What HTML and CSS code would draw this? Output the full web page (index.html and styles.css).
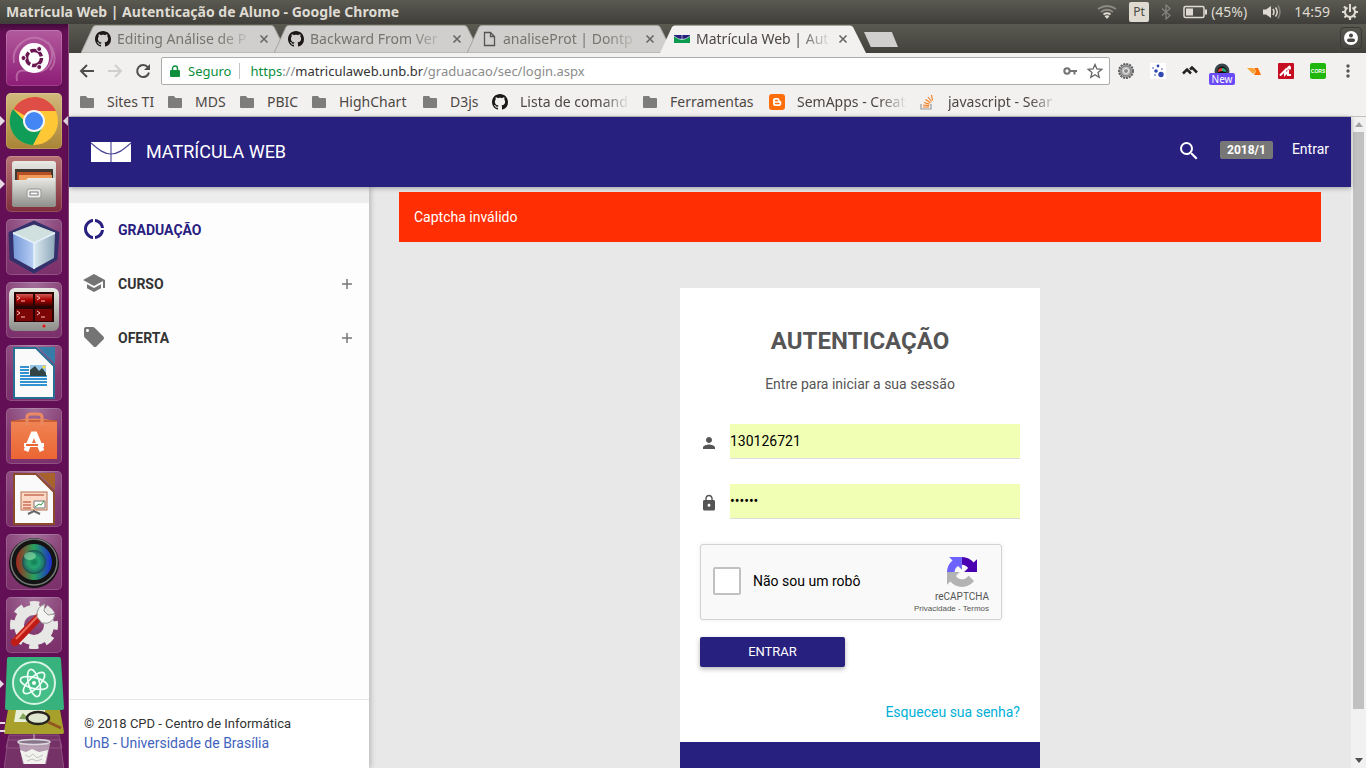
FILE: index.html
```html
<!DOCTYPE html>
<html lang="pt-BR">
<head>
<meta charset="utf-8">
<meta name="viewport" content="width=device-width, initial-scale=1">
<title>Matrícula Web | Autenticação de Aluno</title>
<link rel="stylesheet" href="styles.css">
</head>
<body>
<svg class="defs" aria-hidden="true">
  <defs>
    <symbol id="folder" viewBox="0 0 14 14"><path fill="#7d7d7b" d="M1 1h5l1.500 2H13a1 1 0 0 1 1 1v8a1 1 0 0 1-1 1H1a1 1 0 0 1-1-1V2a1 1 0 0 1 1-1z"/></symbol>
    <symbol id="github" viewBox="0 0 16 16"><path fill="#1b1817" d="M8 0C3.580 0 0 3.580 0 8c0 3.540 2.290 6.530 5.470 7.590.4.070.55-.17.55-.38 0-.19-.01-.82-.01-1.490-2.010.37-2.530-.49-2.690-.94-.09-.23-.48-.94-.82-1.130-.28-.15-.68-.52-.01-.53.63-.01 1.080.58 1.230.82.72 1.210 1.870.87 2.330.66.07-.52.28-.87.51-1.070-1.780-.2-3.640-.89-3.640-3.950 0-.87.31-1.590.82-2.150-.08-.2-.36-1.020.08-2.120 0 0 .67-.21 2.200.82.64-.18 1.320-.27 2-.27s1.360.09 2 .27c1.530-1.040 2.200-.82 2.200-.82.44 1.100.16 1.920.08 2.120.51.56.82 1.270.82 2.150 0 3.070-1.870 3.750-3.650 3.950.29.25.54.73.54 1.480 0 1.070-.01 1.930-.01 2.200 0 .21.15.46.55.38A8.010 8.010 0 0 0 16 8c0-4.420-3.580-8-8-8z"/></symbol>
    <symbol id="close" viewBox="0 0 10 10"><path d="M1.500 1.500l7 7M8.500 1.500l-7 7" stroke="#666" stroke-width="1.600" fill="none"/></symbol>
    <symbol id="plus" viewBox="0 0 12 12"><path d="M6 1v10M1 6h10" stroke="#777" stroke-width="1.500" fill="none"/></symbol>
    <symbol id="tabshape" viewBox="0 0 206 28"><path d="M0 28L12 2Q13 .5 15 .5H190Q192 .5 193 2L206 28z"/></symbol>
    <linearGradient id="gMetal" x2="0" y2="1"><stop stop-color="#e9e9e6"/><stop offset="1" stop-color="#8d8d8a"/></linearGradient>
    <linearGradient id="gBag" x2="0" y2="1"><stop stop-color="#f08556"/><stop offset="1" stop-color="#ec6533"/></linearGradient>
    <linearGradient id="gRed" x2="0" y2="1"><stop stop-color="#d25a55"/><stop offset=".5" stop-color="#a80000"/><stop offset="1" stop-color="#3c0000"/></linearGradient>
    <linearGradient id="gCubeL"><stop stop-color="#7598d8"/><stop offset="1" stop-color="#b9cff4"/></linearGradient>
    <linearGradient id="gCubeR"><stop stop-color="#dceaf2"/><stop offset="1" stop-color="#8da7b8"/></linearGradient>
    <radialGradient id="gLens"><stop stop-color="#0c7651"/><stop offset=".45" stop-color="#24a875"/><stop offset=".8" stop-color="#1d7a6a"/><stop offset="1" stop-color="#174048"/></radialGradient>
    <linearGradient id="gRing"><stop stop-color="#a3271b"/><stop offset=".5" stop-color="#26a35d"/><stop offset="1" stop-color="#1e2bd0"/></linearGradient>
  </defs>
</svg>

<header class="panel">
  <strong class="panel-title">Matrícula Web | Autenticação de Aluno - Google Chrome</strong>
  <div class="panel-tray">
    <svg width="20" height="16" viewBox="0 0 20 16" fill="none" stroke-width="1.800"><path d="M1 5Q10-1 19 5M4 8Q10 3.500 16 8" stroke="#8b8a83"/><path d="M6.500 10.500Q10 8 13.500 10.500" stroke="#dfdbd2"/><path d="M7.500 12L10 15l2.500-3Q10 10.500 7.500 12z" fill="#dfdbd2"/></svg>
    <span class="lang">Pt</span>
    <svg width="10" height="16" viewBox="0 0 10 16"><path d="M1 4.500l8 7-4 3.500V1l4 3.500-8 7" fill="none" stroke="#87867f" stroke-width="1.200"/></svg>
    <span class="battery"><svg width="25" height="14" viewBox="0 0 25 14"><rect x="1" y="1.500" width="20" height="11" rx="1.500" fill="none" stroke="#dfdbd2" stroke-width="1.500"/><path fill="#dfdbd2" d="M3 3.500h7v7H3zM22 4.500h2v5h-2z"/></svg>(45%)</span>
    <svg width="20" height="16" viewBox="0 0 20 16"><path d="M1 5.500h3L9 2v12L4 10.500H1z" fill="#dfdbd2"/><path d="M11 5q2 3 0 6M13.500 3.500q3.500 4.500 0 9" fill="none" stroke="#dfdbd2" stroke-width="1.500"/><path d="M16 1.500q4 6.500 0 13" fill="none" stroke="#85847d" stroke-width="1.500"/></svg>
    <span>14:59</span>
    <svg width="16" height="16" viewBox="0 0 16 16" fill="none" stroke="#dfdbd2"><path d="M5.500 3.700a5 5 0 1 0 5 0" stroke-width="2"/><path d="M8 0v8" stroke-width="2"/><path d="M2 2.500l2 2M14 2.500l-2 2M0 8h3M13 8h3M2.500 13.500l2-2M13.500 13.500l-2-2M8 13v3" stroke-width="2.200"/></svg>
  </div>
</header>

<div class="desktop">
  <nav class="launcher" aria-label="Aplicativos">
    <a href="#" class="tile tile-ubuntu" aria-label="Ubuntu"><svg viewBox="0 0 56 56"><g fill="none" stroke="#c884b4" opacity=".65" stroke-width="2"><path d="M8 33C5 17 21 4 35 9C48 14 53 30 44 40M11 51C8 35 22 42 31 42C44 42 51 26 42 12"/></g><circle cx="28" cy="28" r="15" fill="#fff"/><circle cx="28" cy="28" r="7.500" fill="none" stroke="#6b1751" stroke-width="3.500" stroke-dasharray="13.700 2"/><g fill="#6b1751" stroke="#fff"><circle cx="17.500" cy="28" r="2.500"/><circle cx="33.200" cy="19" r="2.500"/><circle cx="33.200" cy="37" r="2.500"/></g></svg></a>
    <a href="#" class="tile tile-chrome focused" aria-label="Chrome"><svg viewBox="0 0 56 56"><circle cx="28" cy="28" r="24" fill="#fdc735"/><path d="M28 28L7.500 16A24 24 0 0 1 50 18H28z" fill="#df4e46"/><path d="M28 38L7 16A24 24 0 0 0 27 52L37 33z" fill="#109d58"/><circle cx="28" cy="28" r="11" fill="#f4f4f4"/><circle cx="28" cy="28" r="9" fill="#4386f4"/></svg></a>
    <a href="#" class="tile tile-files running" aria-label="Arquivos"><svg viewBox="0 0 56 56"><path d="M6 8q0-3 3-3h38q3 0 3 3v42H6z" fill="url(#gMetal)"/><path d="M9 13h38v13H9z" fill="#403632"/><path d="M11 16h34v9H11z" fill="#b74f25"/><path d="M13 19h33v7H13z" fill="#f09a59"/><path d="M7 24h13l2-2h27v29H7z" fill="url(#gMetal)"/><rect x="21" y="33" width="14" height="9" rx="2" fill="#eee" stroke="#969693"/><rect x="24" y="36" width="8" height="3" fill="#fff" stroke="#777"/></svg></a>
    <a href="#" class="tile" aria-label="NetBeans"><svg viewBox="0 0 56 56"><path d="M28 3L52 14 50 40 28 53 5 40 4 14z" fill="#33306b" stroke="#33306b" stroke-width="3" stroke-linejoin="round"/><path d="M28 6L49 14 28 24 7 14z" fill="#cfe0de" stroke="#cfe0de" stroke-linejoin="round"/><path d="M7 14L28 24V50L8 39z" fill="url(#gCubeL)"/><path d="M49 14L28 24V50L48 39z" fill="url(#gCubeR)"/><path d="M7 14L28 24 49 14M28 24V50" fill="none" stroke="#e6f1fa" stroke-width="1.500"/></svg></a>
    <a href="#" class="tile" aria-label="Terminator"><svg viewBox="0 0 56 56"><rect x="3" y="6" width="50" height="43" rx="6" fill="url(#gMetal)"/><path d="M8 10h40v30H8z" fill="#2a0505"/><g fill="url(#gRed)"><path d="M10 12h17v12H10z"/><path d="M29 12h17v12H29z"/></g><path d="M10 27h17v12H10zM29 27h17v12H29z" fill="#7c0505"/><path d="M11 14l3 2-3 2M15 19h4M31 14l3 2-3 2M35 19h4M11 29l3 2-3 2M15 35h4M31 29l3 2-3 2M35 35h4" fill="none" stroke="#fbb"/><circle cx="38" cy="44" r="1.500" fill="#e11"/></svg></a>
    <a href="#" class="tile" aria-label="Writer"><svg viewBox="0 0 56 56"><path d="M8 3h22l18 18v32H8z" fill="#fafafa" stroke="#286f96" stroke-width="2"/><path d="M32 2h17v17z" fill="#357da8"/><path d="M14 22h9M14 25h9M14 28h9M14 31h27M14 34h27M14 37h27M14 40h27" stroke="#3592d0" stroke-width="2"/><path d="M24 20h16v11H24z" fill="#95c6e8"/><path d="M24 31v-6l5-4 4 5 3-3 4 5v3z" fill="#344"/><circle cx="38" cy="22" r="1.500" fill="#ffdc30"/></svg></a>
    <a href="#" class="tile" aria-label="Programas"><svg viewBox="0 0 56 56"><path d="M5 13q23-5 46 0v38H5z" fill="url(#gBag)"/><path d="M5 13h46" stroke="#a9431d"/><path d="M21 17V9q0-3 4-3h7q4 0 4 3v8" fill="none" stroke="#e98961" stroke-width="3"/><path d="M20 43L27 26h2l7 17" fill="none" stroke="#fff" stroke-width="5"/><path d="M18 37h20" stroke="#fff" stroke-width="4"/><path d="M20 37h12" stroke="#ec6732" stroke-width="2"/></svg></a>
    <a href="#" class="tile" aria-label="Impress"><svg viewBox="0 0 56 56"><path d="M8 3h22l18 18v32H8z" fill="#fafafa" stroke="#8b4b2a" stroke-width="2"/><path d="M32 2h17v17z" fill="#a8622b"/><rect x="15" y="21" width="26" height="18" fill="#fbd9c6" stroke="#b37150"/><path d="M18 24h20M17 31h8M17 34h8M17 37h8" stroke="#b33d20"/><path d="M28 30h11v7H28z" fill="#fff" stroke="#777"/><path d="M29 36l4-3 2 1 3-4" fill="none" stroke="#2a963e"/><path d="M28 39v2M22 43l6-3 6 3" fill="none" stroke="#666" stroke-width="2"/></svg></a>
    <a href="#" class="tile" aria-label="Câmera"><svg viewBox="0 0 56 56"><circle cx="28" cy="29" r="25" fill="#141414"/><circle cx="28" cy="28" r="23" fill="none" stroke="#777" stroke-width="1.500"/><circle cx="28" cy="28" r="18" fill="url(#gRing)"/><circle cx="28" cy="28" r="12" fill="url(#gLens)" opacity=".85"/><ellipse cx="24" cy="22" rx="6" ry="4" fill="#91dda8" opacity=".6"/></svg></a>
    <a href="#" class="tile" aria-label="Configurações"><svg viewBox="0 0 56 56"><circle cx="28" cy="28" r="15" fill="none" stroke="#e7e7e5" stroke-width="10"/><circle cx="28" cy="28" r="20" fill="none" stroke="#e7e7e5" stroke-width="8" stroke-dasharray="8.700 7" stroke-dashoffset="4.350"/><path d="M9 45L33 20" stroke="#bf1c16" stroke-width="8" stroke-linecap="round"/><path d="M10 42L31 20" stroke="#ee6a5b" stroke-width="2"/><path d="M31 20q-1-10 8-13l-1 7 4 4 7-1q-2 11-13 9z" fill="#f4f4f2" stroke="#999"/></svg></a>
    <a href="#" class="folded folded-atom running" aria-label="Atom"><svg viewBox="0 0 60 53"><path d="M4 0h50q2 0 2 2l3 49q0 2-3 2H3q-3 0-3-2L2 2q0-2 2-2z" fill="#38b27c"/><circle cx="29" cy="26" r="21" fill="#45bd87" stroke="#d6f3e4" stroke-width="2"/><g fill="none" stroke="#edfff6" stroke-width="1.700"><ellipse cx="29" cy="26" rx="14" ry="5.500" transform="rotate(15 29 26)"/><ellipse cx="29" cy="26" rx="14" ry="5.500" transform="rotate(75 29 26)"/><ellipse cx="29" cy="26" rx="14" ry="5.500" transform="rotate(135 29 26)"/></g><circle cx="29" cy="26" r="2" fill="#fff"/></svg></a>
    <a href="#" class="folded folded-image stacked" aria-label="Imagens"><svg viewBox="0 0 60 24"><path d="M4 0h52l4 22q0 2-3 2H2q-3 0-2-3z" fill="#a7a12b"/><path d="M12 0h29v12H10z" fill="#e8efd8"/><path d="M15 9l4-6 6 6 5-4 7 5z" fill="#83a45c"/><ellipse cx="34" cy="8" rx="11" ry="6" fill="#dfe7d0" stroke="#25241e" stroke-width="2.500"/><path d="M44 12l13 6" stroke="#915522" stroke-width="3"/></svg></a>
    <a href="#" class="folded folded-trash" aria-label="Lixeira"><svg viewBox="0 0 60 35"><path d="M5 1h50l3 13H2zM4 6h52l4 29H0z" fill="#855077" stroke="#b184a3" opacity=".55"/><path d="M30 0v8" stroke="#cbb6c6"/><path d="M15 10l4 20h23l4-20z" fill="#cfc6cf" opacity=".7"/><path d="M16 16l6 2 6-3 7 3 9-2-3 14H20z" fill="#f1f1ee"/><ellipse cx="30" cy="8" rx="16" ry="2.500" fill="#86748a" stroke="#ddd6dd" stroke-width="1.500"/><path d="M21 21l4 2 4-3 4 4 6-3M23 27l5-2 5 2 5-2" fill="none" stroke="#c4c0c3"/></svg></a>
  </nav>

  <div class="browser">
    <div class="tabstrip">
      <div class="tab"><svg class="tab-bg"><use href="#tabshape"/></svg><svg class="favicon"><use href="#github"/></svg><span class="tab-label">Editing Análise de P</span><button class="tab-close" aria-label="Fechar"><svg><use href="#close"/></svg></button></div>
      <div class="tab"><svg class="tab-bg"><use href="#tabshape"/></svg><svg class="favicon"><use href="#github"/></svg><span class="tab-label">Backward From Ver</span><button class="tab-close" aria-label="Fechar"><svg><use href="#close"/></svg></button></div>
      <div class="tab"><svg class="tab-bg"><use href="#tabshape"/></svg><svg class="favicon" viewBox="0 0 16 16"><path d="M3.500 1.500h6l4 4v9h-10zM9.500 1.500v4h4" fill="none" stroke="#555" stroke-width="1.300"/></svg><span class="tab-label">analiseProt | Dontp</span><button class="tab-close" aria-label="Fechar"><svg><use href="#close"/></svg></button></div>
      <div class="tab active"><svg class="tab-bg"><use href="#tabshape"/></svg><svg class="favicon" viewBox="0 0 16 16"><path d="M0 4h16v4H0z" fill="#28207f"/><path d="M0 5q8 7 16 0v7H0z" fill="#0b9a4e"/><path d="M8 4v4M0 5q8 7 16 0" stroke="#d6e6e1" fill="none" stroke-width=".7"/></svg><span class="tab-label">Matrícula Web | Aut</span><button class="tab-close" aria-label="Fechar"><svg><use href="#close"/></svg></button></div>
      <button class="new-tab" aria-label="Nova guia"></button>
      <button class="profile" aria-label="Perfil"><svg viewBox="0 0 14 14"><circle cx="7" cy="7" r="7" fill="#fff"/><circle cx="7" cy="4.500" r="2" fill="#484741"/><rect x="3" y="7.500" width="8" height="3.500" rx="1.700" fill="#484741"/></svg></button>
    </div>

    <div class="toolbar">
      <button class="nav-button" aria-label="Voltar"><svg viewBox="0 0 16 16"><path d="M15 8H2M8 2L2 8l6 6"/></svg></button>
      <button class="nav-button off" aria-label="Avançar"><svg viewBox="0 0 16 16"><path d="M1 8h13M8 2l6 6-6 6"/></svg></button>
      <button class="nav-button" aria-label="Recarregar"><svg viewBox="0 0 16 16"><path d="M13 4.500A6 6 0 1 0 14 9.500"/><path d="M15 1v6H9z" fill="#4d4d4d" stroke="none"/></svg></button>
      <div class="omnibox">
        <svg width="10" height="13" viewBox="0 0 10 13"><path d="M1 5h8a1 1 0 0 1 1 1v5a1 1 0 0 1-1 1H1a1 1 0 0 1-1-1V6a1 1 0 0 1 1-1z" fill="#0b8f3c"/><path d="M2.500 5V3.500a2.500 2.500 0 0 1 5 0V5" fill="none" stroke="#0b8f3c" stroke-width="1.400"/></svg>
        <span class="secure">Seguro</span>
        <span class="url"><span class="green">https</span>://<span class="host">matriculaweb.unb.br</span>/graduacao/sec/login.aspx</span>
        <svg width="14" height="10" viewBox="0 0 14 10"><circle cx="4" cy="5" r="2.700" fill="none" stroke="#737373" stroke-width="2"/><path d="M7 5h7M11.500 5v3.500" stroke="#737373" stroke-width="2"/></svg>
        <svg width="16" height="16" viewBox="0 0 16 16"><path d="M8 1.500l1.900 4.500 4.800.4-3.700 3.100 1.200 4.800L8 11.700l-4.200 2.600L5 9.500 1.300 6.400 6.100 6z" fill="none" stroke="#666" stroke-width="1.300"/></svg>
      </div>
      <div class="extensions">
        <button aria-label="Engrenagem"><svg viewBox="0 0 16 16"><circle cx="8" cy="8" r="7" fill="#a9a9a9" stroke="#626262" stroke-width="2" stroke-dasharray="2 1"/><circle cx="8" cy="8" r="5" fill="#bbb" stroke="#777"/><circle cx="8" cy="8" r="2.500" fill="#888" stroke="#eee"/></svg></button>
        <button aria-label="Rede"><svg viewBox="0 0 16 16"><path fill="#fff" d="M0 0h16v16H0z"/><g fill="#3147b6"><circle cx="8" cy="3" r="1.400"/><circle cx="6" cy="8" r="1.800"/><circle cx="11" cy="11.500" r="2.700"/><circle cx="3" cy="5" r=".8"/><circle cx="12" cy="6" r=".8"/><circle cx="5" cy="12" r=".8"/></g></svg></button>
        <button aria-label="Picos"><svg viewBox="0 0 16 16"><path d="M1 10.500l4-4 4 4M8 6.500l2-2 5 5" fill="none" stroke="#222" stroke-width="2.500"/></svg></button>
        <button aria-label="Lente"><svg viewBox="0 0 16 16"><circle cx="8" cy="8" r="7.500" fill="#39454b"/><circle cx="8" cy="8" r="4.500" fill="#111"/><path d="M4 9a4 4 0 0 1 4-4v3z" fill="#eb3c36"/><path d="M8 5a4 4 0 0 1 4 4L8 8z" fill="#1eb780"/></svg><span class="new-badge">New</span></button>
        <button aria-label="Asas"><svg viewBox="0 0 16 16"><path d="M1 5h6l3 3-3 3z" fill="#f8a336"/><path d="M8 5h4l3 7H8l2-4z" fill="#ff6d00"/></svg></button>
        <button aria-label="Mendeley"><svg viewBox="0 0 16 16"><rect width="16" height="16" rx="1" fill="#c70d22"/><path d="M2 12.500l5-5v4l3-3v3.500h3M8 7l4-4M12 3.500v3" stroke="#fff" stroke-width="2" fill="none"/></svg></button>
        <button aria-label="CORS"><svg viewBox="0 0 16 16"><rect width="16" height="16" rx="2" fill="#20b70c"/><text x="8" y="10" text-anchor="middle" class="cors">CORS</text></svg></button>
      </div>
      <button class="menu" aria-label="Menu"><svg viewBox="0 0 4 14"><g fill="#555"><circle cx="2" cy="2" r="1.700"/><circle cx="2" cy="7" r="1.700"/><circle cx="2" cy="12" r="1.700"/></g></svg></button>
    </div>

    <nav class="bookmarks" aria-label="Favoritos">
      <a href="#" class="b-m"><svg><use href="#folder"/></svg><span>Sites TI</span></a>
      <a href="#" class="b-s"><svg><use href="#folder"/></svg><span>MDS</span></a>
      <a href="#" class="b-s"><svg><use href="#folder"/></svg><span>PBIC</span></a>
      <a href="#" class="b-l"><svg><use href="#folder"/></svg><span>HighChart</span></a>
      <a href="#" class="b-d"><svg><use href="#folder"/></svg><span>D3js</span></a>
      <a href="#" class="b-xl faded"><svg class="wide"><use href="#github"/></svg><span>Lista de comand</span></a>
      <a href="#" class="b-f"><svg><use href="#folder"/></svg><span>Ferramentas</span></a>
      <a href="#" class="b-xl faded"><svg class="wide" viewBox="0 0 16 16"><rect width="16" height="16" rx="3" fill="#ff6c0a"/><path d="M6 4h2.500q2 0 2 2 0 1 1 1 .8 0 .8 1v1.500q0 2.500-2.500 2.500H6.500Q4 12 4 9.500V6q0-2 2-2z" fill="#fff"/><path d="M6.500 6.500h2M6.500 9.500h3.500" stroke="#ff6c0a" stroke-width="1.300" stroke-linecap="round"/></svg><span>SemApps - Creat</span></a>
      <a href="#" class="b-xl faded"><svg class="wide" viewBox="0 0 16 16"><path d="M1 10v5h10v-5" fill="none" stroke="#999" stroke-width="1.200"/><path d="M3 13h6M3.200 11l5.800.6M4 8.500l5.500 1.600M5.500 5.500l5 3.200M8 3l3.500 4.500M11.500 1l1 5.500" stroke="#f48024" stroke-width="1.200"/></svg><span>javascript - Sear</span></a>
    </nav>

    <div class="viewport">
      <div class="site">
        <header class="site-header">
          <a href="#" class="brand"><svg width="40" height="20" viewBox="0 0 40 20"><path d="M0 0h40v20H0z" fill="#fff"/><path d="M20 0v20" stroke="#9a96c6" stroke-width="2"/><path d="M0 1C8 8 13 12 20 12S32 8 40 1" fill="none" stroke="#4a4595" stroke-width="1.200"/></svg>MATRÍCULA WEB</a>
          <button class="search" aria-label="Pesquisar"><svg viewBox="0 0 24 24"><path fill="#fff" d="M15.500 14h-.79l-.28-.27A6.470 6.470 0 0 0 16 9.500 6.500 6.500 0 1 0 9.500 16c1.610 0 3.090-.59 4.230-1.570l.27.28v.79l5 4.990L20.490 19l-4.990-5zm-6 0C7.010 14 5 11.990 5 9.500S7.010 5 9.500 5 14 7.010 14 9.500 11.990 14 9.500 14z"/></svg></button>
          <span class="term">2018/1</span>
          <a href="#" class="enter">Entrar</a>
        </header>
        <div class="site-body">
          <aside class="sidebar">
            <nav class="side-menu" aria-label="Menu principal">
              <a href="#" class="current"><svg viewBox="0 0 24 24"><path d="M11 5.080V2c-5 .5-9 4.810-9 10s4 9.500 9 10v-3.080c-3-.48-6-3.400-6-6.920s3-6.440 6-6.920zM18.970 11H22c-.47-5-4-8.530-9-9v3.080C16 5.510 18.540 8 18.970 11zM13 18.920V22c5-.47 8.530-4 9-9h-3.030c-.43 3-2.970 5.490-5.970 5.920z"/></svg><span>GRADUAÇÃO</span></a>
              <a href="#"><svg viewBox="0 0 24 24"><path d="M5 13.180v4L12 21l7-3.820v-4L12 17l-7-3.820zM12 3L1 9l11 6 9-4.910V17h2V9L12 3z"/></svg><span>CURSO</span><svg class="plus"><use href="#plus"/></svg></a>
              <a href="#"><svg viewBox="0 0 24 24"><path d="M21.410 11.580l-9-9C12.050 2.220 11.550 2 11 2H4c-1.100 0-2 .9-2 2v7c0 .55.22 1.050.59 1.420l9 9c.36.36.86.58 1.410.58s1.050-.22 1.410-.59l7-7c.37-.36.59-.86.59-1.410s-.23-1.060-.59-1.420zM5.500 7C4.670 7 4 6.330 4 5.500S4.670 4 5.500 4 7 4.670 7 5.500 6.330 7 5.500 7z"/></svg><span>OFERTA</span><svg class="plus"><use href="#plus"/></svg></a>
            </nav>
            <footer class="legal"><div>© 2018 CPD - Centro de Informática</div><a href="#">UnB - Universidade de Brasília</a></footer>
          </aside>
          <main class="content">
            <div class="alert" role="alert">Captcha inválido</div>
            <form class="card">
              <h1>AUTENTICAÇÃO</h1>
              <p>Entre para iniciar a sua sessão</p>
              <div class="field"><label for="user" aria-label="Matrícula"><svg viewBox="0 0 24 24"><path d="M12 12c2.210 0 4-1.790 4-4s-1.790-4-4-4-4 1.790-4 4 1.790 4 4 4zm0 2c-2.670 0-8 1.340-8 4v2h16v-2c0-2.660-5.330-4-8-4z"/></svg></label><input id="user" type="text" value="130126721"></div>
              <div class="field"><label for="pass" aria-label="Senha"><svg viewBox="0 0 24 24"><path d="M18 8h-1V6c0-2.760-2.240-5-5-5S7 3.240 7 6v2H6c-1.100 0-2 .9-2 2v10c0 1.100.9 2 2 2h12c1.100 0 2-.9 2-2V10c0-1.100-.9-2-2-2zm-6 9c-1.100 0-2-.9-2-2s.9-2 2-2 2 .9 2 2-.9 2-2 2zm3.100-9H8.900V6c0-1.710 1.390-3.100 3.100-3.100s3.100 1.390 3.100 3.100v2z"/></svg></label><input id="pass" type="password" value="123456"></div>
              <div class="captcha">
                <input id="robot" type="checkbox"><label for="robot">Não sou um robô</label>
                <div class="captcha-brand">
                  <svg viewBox="0 0 64 64"><path d="M64 31.955l-.033-1.370V4.687l-7.160 7.160C50.948 4.674 42.033.093 32.050.093L32 16.300c5.600.1 10.300 3.100 13.013 7.340l-8.307 8.307L64 31.953" fill="#4a00b0"/><path d="M31.862.094l-1.370.033H4.594l7.160 7.160C4.580 13.147 0 22.060 0 32.046h16.260c0-.485.057-.86.163-1.135.393-4.976 3.140-9.288 7.124-11.828l8.307 8.307L31.860.095" fill="#6c63ff"/><path d="M.001 32.045l.033 1.370v25.898l7.160-7.160c5.860 7.173 14.774 11.754 24.760 11.754 10.400 0 19.622-4.960 25.458-12.640l-11.736-11.860a15.550 15.550 0 0 1-4.754 5.334c-2.050 1.600-4.952 2.906-8.968 2.906-.485 0-.86-.057-1.135-.163-4.976-.393-9.288-3.140-11.828-7.124l8.307-8.307c-10.522.04-22.400.066-27.295-.005" fill="#b3b3b3"/></svg>
                  <span>reCAPTCHA</span>
                  <small><a href="#">Privacidade</a> - <a href="#">Termos</a></small>
                </div>
              </div>
              <button class="submit" type="button">ENTRAR</button>
              <a href="#" class="forgot">Esqueceu sua senha?</a>
            </form>
            <div class="card-footer"></div>
          </main>
        </div>
      </div>
      <div class="scrollbar" aria-hidden="true"><span class="arrow up"></span><span class="thumb"></span><span class="arrow down"></span></div>
    </div>
  </div>
</div>
</body>
</html>
```
FILE: styles.css
```css
* { box-sizing: border-box; }
body {
  margin: 0;
  height: 100vh;
  display: flex;
  flex-direction: column;
  overflow: hidden;
  font: 14px/20px Roboto, "Liberation Sans", sans-serif;
  color: #555;
}
a { color: inherit; text-decoration: none; }
button { border: 0; padding: 0; background: none; font: inherit; color: inherit; }
svg { display: block; flex: none; }
.defs { position: absolute; width: 0; height: 0; }

/* Desktop panel */
.panel {
  flex: none;
  height: 24px;
  padding: 0 8px 0 6px;
  display: flex;
  align-items: center;
  justify-content: space-between;
  background: linear-gradient(#5b5a51, #3f3e3a);
  color: #dfdbd2;
  font: 14px/24px "Noto Sans", "Open Sans", sans-serif;
}
.panel-tray { display: flex; align-items: center; gap: 12px; }
.lang {
  width: 20px;
  border-radius: 2px;
  background: #dfdbd2;
  color: #4a4943;
  font-size: 12px;
  line-height: 20px;
  text-align: center;
}
.battery { display: flex; align-items: center; gap: 3px; margin-right: 3px; }

.desktop { flex: 1; min-height: 0; display: flex; }

/* Launcher */
.launcher {
  flex: none;
  width: 69px;
  padding: 6px 0 0 6px;
  border-right: 1px solid #8a4a7b;
  background: linear-gradient(#43093a, #640f55 8px, #620f55);
  display: flex;
  flex-direction: column;
  overflow: hidden;
}
.tile, .folded { position: relative; flex: none; }
.tile {
  width: 56px;
  height: 56px;
  margin-bottom: 7px;
  border-radius: 5px;
  background: radial-gradient(circle at 50% 0, #a3709b, #82386f 60%, #7a2f6b);
  box-shadow: inset 0 0 0 1px rgba(255, 255, 255, .16);
}
.tile-ubuntu { background: linear-gradient(#b25a9d, #8d1c76); }
.tile-chrome { background: linear-gradient(#d2b97d, #a98435); }
.tile-files { background: linear-gradient(#b87575, #7f2d3c); }
.folded { margin-left: -1px; width: 60px; }
.folded-atom { height: 53px; margin-top: -3px; }
.folded-image { height: 24px; margin-left: -2px; }
.folded-trash { height: 35px; margin-left: -2px; }
.running::before, .focused::before, .focused::after {
  content: "";
  position: absolute;
  left: -6px;
  top: calc(50% - 5px);
  border: 5px solid transparent;
  border-left-color: #e6dbe4;
  border-right-width: 0;
}
.focused::after {
  left: auto;
  right: -6px;
  border-width: 5px 5px 5px 0;
  border-left-color: transparent;
  border-right-color: #e6dbe4;
}
.stacked::before {
  content: "";
  position: absolute;
  left: -4px;
  top: 12px;
  width: 5px;
  height: 6px;
  border: solid #e6dbe4;
  border-width: 2px 0;
}

/* Browser */
.browser { flex: 1; min-width: 0; display: flex; flex-direction: column; font-family: "Noto Sans", "Open Sans", sans-serif; }
.tabstrip {
  flex: none;
  height: 29px;
  padding: 1px 8px 0 12px;
  display: flex;
  background: linear-gradient(#5b5a51, #42413c);
}
.tab {
  position: relative;
  flex: none;
  width: 206px;
  height: 28px;
  margin-right: -13px;
  padding: 0 18px 0 14px;
  display: flex;
  align-items: center;
  color: #77746f;
}
.tab-bg { position: absolute; inset: 0; width: 206px; height: 28px; fill: #d0cfcd; stroke: #a4a39f; }
.tab.active { z-index: 1; color: #4d4744; }
.active .tab-bg { fill: #f2f1f0; stroke: none; }
.favicon, .tab-label, .tab-close { position: relative; }
.favicon { width: 16px; height: 16px; margin-right: 6px; }
.tab-label { flex: 1; white-space: nowrap; -webkit-mask-image: linear-gradient(90deg, #000 75%, transparent); mask-image: linear-gradient(90deg, #000 75%, transparent); }
.tab-close { margin-left: 6px; }
.tab-close svg { width: 10px; height: 10px; }
.new-tab { width: 34px; height: 15px; margin: 7px 0 0 11px; background: #d0cfcd; clip-path: polygon(0 0, 82% 0, 100% 100%, 20% 100%); }
.profile { width: 22px; height: 22px; margin: 2px 0 0 auto; padding: 3px; border: 1px solid #3a3935; border-radius: 4px; }
.profile svg { width: 14px; height: 14px; }
.tabstrip { padding-right: 4px; }

.toolbar { flex: none; height: 36px; padding: 0 9px 0 10px; display: flex; align-items: center; background: #f2f1f0; }
.nav-button { width: 16px; margin-right: 12px; }
.nav-button svg { width: 16px; height: 16px; fill: none; stroke: #4d4d4d; stroke-width: 2; }
.nav-button.off svg { stroke: #cfcfcd; }
.omnibox {
  flex: 1;
  min-width: 0;
  height: 28px;
  margin-left: -2px;
  padding: 0 6px 0 8px;
  display: flex;
  align-items: center;
  gap: 10px;
  border: 1px solid #acacaa;
  border-radius: 2px;
  background: #fff;
  font-size: 13px;
}
.secure { margin-left: -2px; padding-right: 8px; border-right: 1px solid #c4c4c4; color: #0b8f3c; line-height: 16px; }
.url { flex: 1; color: #8b8b8b; white-space: nowrap; }
.green { color: #0b8f3c; }
.host { color: #333; }
.extensions { display: flex; }
.extensions button { position: relative; width: 32px; height: 28px; padding: 6px 8px; }
.extensions svg { width: 16px; height: 16px; }
.new-badge { position: absolute; left: 3px; bottom: 0; width: 26px; border-radius: 2px; background: #6a4bf5; color: #fff; font-size: 10px; line-height: 12px; }
.cors { font: bold 5px "Liberation Sans", sans-serif; fill: #fff; }
.menu { width: 4px; margin: 0 7px 0 12px; }
.menu svg { width: 4px; height: 14px; }

.bookmarks { flex: none; height: 28px; padding-left: 11px; display: flex; background: #f2f1f0; border-bottom: 1px solid #c3c2c0; color: #4d4744; overflow: hidden; }
.bookmarks a { flex: none; display: flex; align-items: center; height: 26px; gap: 13px; white-space: nowrap; }
.bookmarks svg { width: 14px; height: 14px; }
.bookmarks svg.wide { width: 16px; height: 16px; }
.bookmarks .b-s { width: 72px; }
.bookmarks .b-d { width: 69px; }
.bookmarks .b-m { width: 88px; }
.bookmarks .b-l { width: 111px; }
.bookmarks .b-f { width: 126px; }
.bookmarks .b-xl { width: 151px; gap: 12px; }
.faded span { width: 110px; -webkit-mask-image: linear-gradient(90deg, #000 75%, transparent); mask-image: linear-gradient(90deg, #000 75%, transparent); }

/* Site */
.viewport { flex: 1; min-height: 0; display: flex; font-family: Roboto, "Liberation Sans", sans-serif; }
.site { flex: 1; min-width: 0; display: flex; flex-direction: column; background: #e8e8e8; }
.site-header {
  position: relative;
  z-index: 2;
  flex: none;
  height: 70px;
  padding: 0 22px;
  display: flex;
  align-items: center;
  background: #28207f;
  color: #fff;
  box-shadow: 0 1px 5px rgba(0, 0, 0, .35);
}
.brand { display: flex; align-items: center; gap: 15px; margin-right: auto; font-size: 18px; }
.search svg { width: 24px; height: 24px; }
.search { margin-top: -2px; }
.term { margin: -4px 19px 0; padding: 0 7px; border-radius: 2px; background: #777; font-size: 12px; font-weight: bold; line-height: 18px; }
.enter { margin-top: -6px; }
.site-body { flex: 1; min-height: 0; display: flex; }
.sidebar {
  position: relative;
  z-index: 1;
  flex: none;
  width: 300px;
  display: flex;
  flex-direction: column;
  border-top: 16px solid #ededed;
  background: #fdfdfd;
  box-shadow: 2px 0 5px rgba(0, 0, 0, .2);
}
.side-menu a { display: flex; align-items: center; height: 54px; padding: 0 16px 0 13px; color: #333; font-weight: bold; }
.side-menu svg { width: 24px; height: 24px; fill: #747474; margin-top: -2px; }
.side-menu span { flex: 1; margin-left: 12px; }
.side-menu svg.plus { width: 12px; height: 12px; margin-top: 0; }
.side-menu .current { color: #28207f; }
.side-menu .current svg { fill: #28207f; }
.legal { margin-top: auto; padding: 14px 15px 15px; border-top: 1px solid #e6e6e6; background: #fff; font-size: 13px; line-height: 19px; color: #333; }
.legal a { font-size: 14px; line-height: 20px; color: #3f63bd; }

.content { flex: 1; min-width: 0; padding: 5px 30px 0; overflow: hidden; display: flex; flex-direction: column; align-items: center; }
.alert { flex: none; align-self: stretch; margin-bottom: 46px; padding: 15px; background: #ff2f03; color: #fff; }
.card { flex: none; width: 360px; padding: 35px 20px 20px; display: flex; flex-direction: column; background: #fff; }
.card h1 { margin: 0 0 15px; font-size: 24px; line-height: 36px; text-align: center; }
.card p { margin: 0 0 30px; text-align: center; }
.field { display: flex; align-items: center; margin-bottom: 25px; }
.field label { width: 30px; }
.field svg { width: 18px; height: 18px; fill: #555; margin-top: 2px; }
.field input { flex: 1; min-width: 0; height: 35px; padding: 0; border: 0; border-bottom: 1px solid #ddd; background: #f1ffb5; color: #000; font: inherit; outline: 0; }
.captcha {
  width: 302px;
  height: 76px;
  margin-bottom: 17px;
  padding: 0 12px 2px;
  display: flex;
  align-items: center;
  border: 1px solid #d3d3d3;
  border-radius: 3px;
  background: #f9f9f9;
  color: #000;
  box-shadow: 0 0 4px rgba(0, 0, 0, .08);
}
.captcha input { appearance: none; width: 28px; height: 28px; margin: 0 12px 0 0; border: 2px solid #c1c1c1; border-radius: 2px; background: #fff; }
.captcha-brand { margin-left: auto; padding-top: 9px; display: flex; flex-direction: column; align-items: flex-end; color: #555; font-size: 10px; line-height: 12px; }
.captcha-brand svg { width: 30px; height: 30px; margin: 0 12px 4px 0; }
.captcha-brand small { font: 8px/12px "Liberation Sans", sans-serif; }
.submit { width: 145px; height: 30px; border-radius: 2px; background: #28207f; color: #fff; font-size: 13px; box-shadow: 0 2px 5px rgba(0, 0, 0, .3); }
.forgot { margin-top: 35px; align-self: flex-end; color: #00b0d8; }
.card-footer { flex: 1; width: 360px; background: #28207f; }

.scrollbar { flex: none; width: 15px; padding: 5px 2px; display: flex; flex-direction: column; background: #f1f1f1; }
.thumb { height: 577px; margin: 5px 0 auto; background: #c1c1c1; }
.arrow { width: 0; margin-left: 2px; border: 4px solid transparent; }
.arrow.up { border-top: 0; border-bottom: 5px solid #a3a3a3; }
.arrow.down { border-bottom: 0; border-top: 5px solid #505050; }
```
